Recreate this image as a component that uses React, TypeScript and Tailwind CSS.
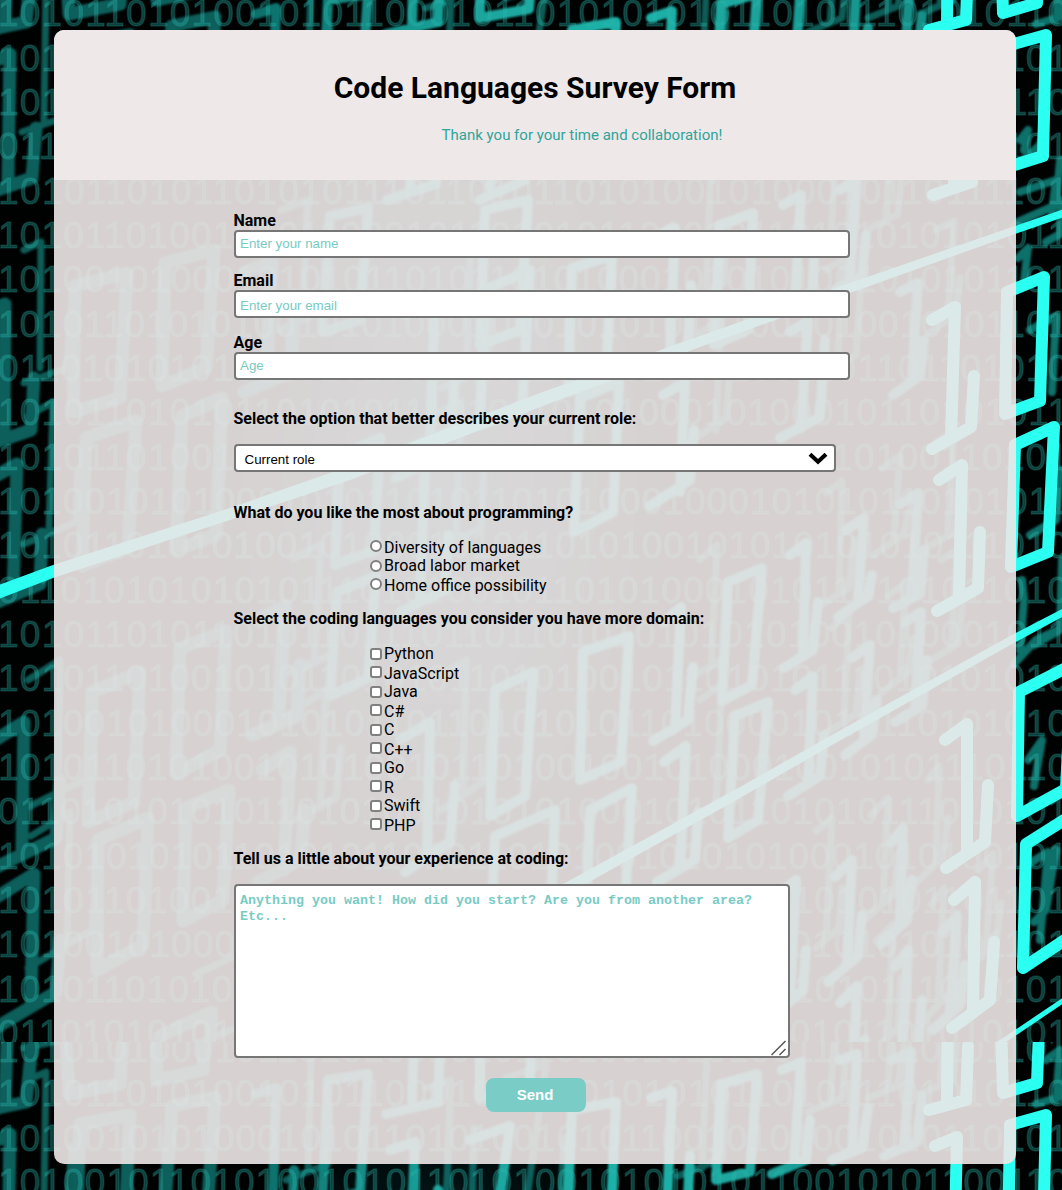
import React from "react";

const TILE_HEIGHT = 1080;

const DIGIT_ROWS = [
  "10101010001011010100101011010010101001101010101101",
  "10101101010010101100010110101010101101011101010110",
  "10100101010001010110101001010110010101001010110101",
  "10100101101010010101101010010101010110010101100110",
  "01101010101110101010010101101010010110101010101101",
  "10101101011010101110110101101010010100010110111101",
  "10101101001010110001011010101101010110101010101011",
  "10100101000101010110101101010001010101001010101101",
  "10101101010100101010001010101010101001010010101101",
  "01101010101011010100101011010010101001101101101010",
  "10101101010110101011101011010100010100010110101011",
  "10101101001010110001011010101101010110110100110101",
  "10100101010001010110101101010001000101010110101011",
  "10101101010100101000101011010100101010101010111010",
  "01101010101010111010100101101010001010110101011010",
  "10101101011010110111011011010101010101001010001011",
  "10101101001010110101011010100101101010111010101010",
  "10100101000101010110110101010110100001010110101010",
  "10101101010010101001011010010010100010010101110110",
  "01101010101011010100101010100010101101010111010101",
  "10101010101101010110101101010010101010001010100101",
  "10101101001010100110101101010101010101010101101101",
  "10100101000100110110101011010101010100101010101101",
  "10101101010100101010001010101101010101010111010101",
  "01101010101101010010101101001010100110101101010101",
];

// A slanted zero given by its four corners: top left, top right, bottom right, bottom left.
type Zero = [number, number, number, number, number, number, number, number];
// A slanted one given by flag start, top, stem foot, base left, base right and tick end.
type One = [number, number, number, number, number, number, number, number, number, number, number, number];

const zeroPath = (z: Zero) => `M${z[0]} ${z[1]}L${z[2]} ${z[3]}L${z[4]} ${z[5]}L${z[6]} ${z[7]}Z`;
const onePath = (o: One) =>
  `M${o[0]} ${o[1]}L${o[2]} ${o[3]}L${o[4]} ${o[5]}M${o[6]} ${o[7]}L${o[8]} ${o[9]}L${o[10]} ${o[11]}`;

const BRIGHT_ZEROS: Zero[] = [
  [1000, -90, 1041, -100, 1037, 3, 1003, 13],
  [1010, 45, 1046, 35, 1043, 156, 1008, 167],
  [1007, 292, 1044, 277, 1040, 401, 1005, 414],
  [1015, 445, 1054, 427, 1048, 552, 1011, 567],
  [1019, 692, 1072, 665, 1066, 789, 1017, 816],
  [1026, 844, 1080, 810, 1075, 933, 1023, 968],
];
const BRIGHT_ONES: One[] = [
  [930, -80, 948, -90, 947, 24, 929, 30, 966, 20, 968, -34],
  [935, 66, 957, 57, 954, 186, 933, 195, 972, 182, 976, 130],
  [932, 320, 955, 307, 951, 438, 932, 449, 971, 427, 974, 376],
  [939, 480, 962, 465, 959, 598, 937, 611, 978, 588, 980, 532],
  [945, 740, 967, 724, 967, 852, 946, 868, 985, 842, 988, 785],
  [954, 900, 975, 882, 973, 1010, 952, 1028, 990, 1000, 994, 942],
];

const MID_ZEROS: Zero[] = [
  [480, -60, 535, -74, 529, 9, 480, 18],
  [328, 0, 368, -6, 360, 112, 322, 124],
  [330, 216, 368, 208, 360, 320, 322, 332],
  [485, 210, 528, 200, 520, 330, 480, 345],
  [485, 290, 530, 270, 522, 410, 480, 425],
  [572, 30, 616, 22, 610, 150, 566, 163],
  [572, 268, 612, 256, 606, 378, 568, 392],
  [580, 398, 619, 382, 613, 512, 574, 532],
  [583, 652, 629, 636, 621, 762, 580, 780],
  [721, 4, 757, -6, 750, 92, 716, 100],
  [720, 225, 753, 213, 748, 330, 714, 345],
  [728, 582, 762, 568, 752, 685, 722, 701],
  [735, 716, 768, 702, 758, 820, 728, 838],
  [495, 690, 533, 672, 525, 796, 490, 816],
  [495, 836, 555, 810, 550, 940, 490, 960],
  [337, 592, 376, 576, 368, 678, 330, 696],
  [340, 455, 380, 438, 374, 550, 335, 565],
  [590, 810, 632, 788, 625, 900, 586, 920],
];

const MID_ONES: One[] = [
  [256, 14, 276, 8, 272, 150, 250, 162, 292, 146, 294, 90],
  [390, 70, 415, 62, 410, 190, 387, 200, 436, 184, 438, 110],
  [390, -45, 414, -54, 412, 26, 386, 34, 438, 22, 440, -38],
  [470, 60, 510, 46, 490, 186, 480, 200, 525, 180, 528, 120],
  [405, 315, 435, 302, 430, 440, 405, 450, 452, 430, 455, 360],
  [395, 478, 425, 464, 420, 598, 400, 612, 445, 590, 448, 535],
  [400, 740, 430, 722, 427, 850, 405, 872, 450, 842, 455, 785],
  [651, 18, 672, 11, 666, 150, 642, 158, 687, 140, 690, 75],
  [650, 238, 675, 228, 670, 352, 648, 364, 688, 345, 691, 285],
  [663, 395, 685, 382, 680, 492, 650, 506, 690, 480, 694, 430],
  [664, 622, 681, 607, 675, 728, 653, 741, 688, 720, 693, 667],
  [664, 762, 686, 746, 680, 868, 657, 882, 695, 860, 698, 812],
  [782, -10, 801, -18, 794, 84, 772, 94, 806, 80, 810, 40],
  [783, 205, 801, 195, 795, 300, 772, 315, 812, 296, 815, 240],
  [790, 332, 808, 321, 801, 428, 780, 438, 820, 417, 825, 340],
  [790, 555, 806, 543, 803, 655, 784, 668, 813, 650, 818, 602],
  [795, 690, 813, 676, 808, 782, 788, 796, 820, 776, 824, 735],
  [846, 530, 864, 518, 858, 600, 838, 617, 868, 596, 872, 575],
  [852, 658, 870, 645, 864, 740, 845, 755, 872, 735, 877, 700],
  [840, -20, 857, -26, 852, 72, 832, 80, 862, 68, 868, 28],
  [840, 190, 857, 180, 850, 278, 835, 290, 862, 276, 866, 235],
  [892, -20, 911, -28, 904, 66, 884, 76, 917, 62, 922, 16],
  [900, 504, 918, 493, 912, 593, 893, 608, 920, 594, 924, 550],
  [905, 622, 921, 612, 915, 708, 895, 722, 922, 706, 927, 660],
  [900, 292, 918, 283, 912, 378, 893, 395, 920, 376, 924, 340],
  [892, 842, 903, 828, 900, 925, 881, 944, 907, 920, 912, 880],
  [835, 877, 852, 860, 847, 963, 828, 982, 858, 956, 862, 915],
  [895, 967, 908, 950, 902, 1060, 890, 1080, 918, 1050, 922, 1000],
  [840, 1003, 857, 986, 852, 1100, 828, 1120, 862, 1090, 865, 1040],
  [780, 893, 796, 880, 790, 1000, 780, 1010, 803, 990, 806, 950],
  [942, 932, 957, 916, 950, 1010, 933, 1030, 960, 1005, 965, 965],
];

const DIM_ZEROS: Zero[] = [
  [65, -60, 125, -75, 120, 4, 69, 14],
  [155, -80, 206, -90, 203, -10, 157, 0],
  [80, 44, 130, 35, 124, 160, 76, 172],
  [172, 26, 215, 17, 206, 150, 162, 165],
  [75, 286, 127, 273, 120, 398, 73, 412],
  [165, 263, 214, 250, 206, 368, 162, 386],
  [86, 438, 136, 421, 128, 548, 82, 566],
  [182, 416, 222, 398, 216, 535, 176, 550],
  [92, 692, 140, 672, 134, 802, 88, 822],
  [180, 648, 226, 631, 220, 750, 176, 774],
  [98, 840, 148, 818, 143, 945, 97, 970],
  [186, 808, 229, 790, 223, 900, 183, 921],
];

const DIM_ONES: One[] = [
  [-15, -60, 8, -68, 5, 20, -12, 30, 26, 22, 32, -34],
  [-8, 62, 10, 54, 8, 182, -14, 194, 32, 178, 36, 128],
  [-12, 312, 5, 304, 4, 430, -12, 445, 31, 430, 34, 378],
  [-8, 478, 17, 464, 13, 592, -12, 606, 40, 584, 42, 534],
  [-8, 742, 24, 722, 22, 848, -14, 872, 56, 838, 60, 780],
  [-5, 898, 34, 874, 31, 1000, -8, 1030, 56, 992, 60, 940],
  [258, 620, 285, 606, 278, 725, 252, 735, 297, 716, 300, 665],
  [262, 770, 290, 752, 284, 870, 258, 882, 300, 860, 305, 810],
  [245, 272, 272, 262, 266, 380, 244, 392, 290, 372, 294, 320],
  [160, 1036, 212, 1012, 206, 1090, 150, 1110, 212, 1085, 215, 1060],
];

const EDGE_ONES: One[] = [
  [1020, 140, 1028, 130, 1024, 150, 1018, 165, 1040, 145, 1044, 130],
  [1020, 192, 1056, 180, 1052, 212, 1018, 222, 1056, 205, 1060, 160],
  [1018, 258, 1028, 248, 1024, 282, 1046, 242, 1060, 234, 1061, 200],
  [1030, 330, 1056, 316, 1052, 392, 1030, 535, 1056, 520, 1060, 470],
  [1022, 580, 1024, 600, 1020, 650, 1034, 645, 1060, 630, 1062, 560],
  [1028, 760, 1042, 740, 1034, 786, 1014, 664, 1036, 640, 1058, 630],
  [1032, 862, 1048, 852, 1040, 940, 1034, 922, 1046, 910, 1056, 850],
  [1046, -20, 1060, -30, 1056, 20, 1036, 24, 1064, 16, 1066, 0],
];

/** One repeat of the binary-code wallpaper. */
function Tile({ y, clip }: { y: number; clip: string }) {
  return (
    <g clipPath={clip}>
      <g transform={`translate(0 ${y})`} fill="none" strokeLinecap="round" strokeLinejoin="round">
        <g filter="url(#soften)">
          <path
            d={[...MID_ONES, ...DIM_ONES].map(onePath).join("")}
            transform="translate(36 -62)"
            stroke="#0d5b57"
            strokeWidth="7"
          />
          <g stroke="#0a5f5b" strokeWidth="13">
            <path d={DIM_ZEROS.map(zeroPath).join("")} />
            <path d={DIM_ONES.map(onePath).join("")} />
          </g>
          <g stroke="url(#depth)" strokeWidth="10">
            <path d={MID_ZEROS.map(zeroPath).join("")} />
            <path d={MID_ONES.map(onePath).join("")} />
          </g>
          <path d={EDGE_ONES.map(onePath).join("")} stroke="#107069" strokeWidth="8" />
          <ellipse cx="440" cy="470" rx="250" ry="460" fill="url(#glow)" />
        </g>
        <g
          fill="#2bb5ab"
          fillOpacity="0.34"
          stroke="#2bb5ab"
          strokeOpacity="0.2"
          strokeWidth="1.4"
          fontFamily="'Liberation Sans', Arial, sans-serif"
          fontSize="37"
          filter="url(#edge)"
        >
          {DIGIT_ROWS.map((row, i) => (
            <text key={i} x={-2} y={-18 + i * 44.33} textLength={1070} lengthAdjust="spacing">
              {row}
            </text>
          ))}
        </g>
        <g filter="url(#edge)">
          <g stroke="#2bfff1" strokeWidth="12">
            <path d={BRIGHT_ZEROS.map(zeroPath).join("")} />
            <path d={BRIGHT_ONES.map(onePath).join("")} />
          </g>
          <g fill="#2bfff1">
            <path d="M1064 209L1015 226L850 283L700 336L540 393L350 466L230 508L53 565L-4 586V600L53 578L230 520L350 480L540 407L700 347L850 293L1015 234L1064 217Z" />
            <path d="M1064 608L1010 636L830 736L740 787L574 878L400 970V982L580 887L740 798L832 745L1012 644L1064 616Z" />
            <path d="M1064 997L1009 1034L960 1066V1072L1009 1040L1064 1003Z" />
          </g>
        </g>
      </g>
    </g>
  );
}

function Wallpaper() {
  return (
    <svg className="absolute inset-0" width="1062" height="1190" viewBox="0 0 1062 1190" aria-hidden="true">
      <defs>
        <filter id="soften" x="-5%" y="-5%" width="110%" height="110%">
          <feGaussianBlur stdDeviation="1" />
        </filter>
        <filter id="edge" x="-5%" y="-5%" width="110%" height="110%">
          <feGaussianBlur stdDeviation="0.6" />
        </filter>
        <linearGradient id="depth" gradientUnits="userSpaceOnUse" x1="240" y1="0" x2="960" y2="0">
          <stop offset="0" stopColor="#0c6a66" />
          <stop offset="0.3" stopColor="#1aa39b" />
          <stop offset="0.55" stopColor="#1fb3aa" />
          <stop offset="1" stopColor="#148a83" />
        </linearGradient>
        <radialGradient id="glow">
          <stop offset="0" stopColor="#2cb8c4" stopOpacity="0.42" />
          <stop offset="1" stopColor="#2cb8c4" stopOpacity="0" />
        </radialGradient>
        <clipPath id="upper">
          <rect width="1062" height="1042" />
        </clipPath>
        <clipPath id="lower">
          <rect y="1042" width="1062" height="148" />
        </clipPath>
      </defs>
      <rect width="1062" height="1190" fill="#000202" />
      <Tile y={0} clip="url(#upper)" />
      <Tile y={TILE_HEIGHT} clip="url(#lower)" />
    </svg>
  );
}

const FIELD =
  "block h-7 w-[616px] rounded border-2 border-[#767676] bg-white px-1 font-['Liberation_Sans',Arial,sans-serif] text-[13.333px] placeholder:text-[#78cbc4] placeholder:opacity-100";

const LABEL = "block h-5 pt-px -indent-[0.5px] font-bold";

function Option({ type, label, raised }: { type: "radio" | "checkbox"; label: string; raised: boolean }) {
  return (
    <label className="flex h-[19px] items-center text-base leading-[19px]">
      <input
        type={type}
        name={type}
        className={`size-3 shrink-0 appearance-none border-2 border-[#808080] bg-white ${
          type === "radio" ? "rounded-full" : "rounded-[3px]"
        } ${raised ? "mb-0.5" : ""}`}
      />
      <span className={raised ? "ml-0.5 pt-0.5" : "ml-0.5"}>{label}</span>
    </label>
  );
}

const LANGUAGES = ["Python", "JavaScript", "Java", "C#", "C", "C++", "Go", "R", "Swift", "PHP"];
const REASONS = ["Diversity of languages", "Broad labor market", "Home office possibility"];

export default function App() {
  return (
    <div className="relative h-[1190px] w-[1062px] overflow-hidden bg-black pt-[30px] font-[Roboto,sans-serif] text-black">
      <Wallpaper />
      <main className="relative ml-[54px] h-[1134px] w-[962px] overflow-hidden rounded-[10px] bg-[rgba(238,232,232,0.9)]">
        <header className="h-[150px] bg-[#eee8e8] pt-[39px] text-center">
          <h1 className="text-[30px] leading-[38px] font-bold">Code Languages Survey Form</h1>
          <p className="mt-[19px] pl-[94px] text-[15px] leading-[18px] text-[#2fa59b]">
            Thank you for your time and collaboration!
          </p>
        </header>
        <form className="pl-[180px] text-base leading-5">
          <label className={`mt-[30px] ${LABEL}`}>Name</label>
          <input className={`${FIELD} pb-0.5`} placeholder="Enter your name" />
          <label className={`mt-3 ${LABEL}`}>Email</label>
          <input className={`${FIELD} pt-0.5`} placeholder="Enter your email" />
          <label className={`mt-3.5 ${LABEL}`}>Age</label>
          <input className={`${FIELD} pb-0.5`} placeholder="Age" />

          <p className={`mt-7 ${LABEL}`}>Select the option that better describes your current role:</p>
          <div className="mt-4 flex h-7 w-[602px] items-center justify-between rounded border-2 border-[#767676] bg-white pr-1.5 pl-[9px] font-['Liberation_Sans',Arial,sans-serif] text-[13.333px]">
            <span className="pt-[3px] -indent-[0.5px]">Current role</span>
            <svg width="20" height="13" viewBox="0 0 20 13" aria-hidden="true">
              <path d="M2 2.2L10 9.8L18 2.2" fill="none" stroke="#000" strokeWidth="4" />
            </svg>
          </div>

          <p className={`mt-[30px] ${LABEL}`}>What do you like the most about programming?</p>
          <div className="mt-[15px] pl-[136px]">
            {REASONS.map((reason, i) => (
              <Option key={reason} type="radio" label={reason} raised={i % 2 === 0} />
            ))}
          </div>

          <p className={`mt-[14px] ${LABEL}`}>Select the coding languages you consider you have more domain:</p>
          <div className="mt-4 pl-[136px]">
            {LANGUAGES.map((language, i) => (
              <Option key={language} type="checkbox" label={language} raised={i % 2 === 1} />
            ))}
          </div>

          <p className={`mt-[14px] ${LABEL}`}>Tell us a little about your experience at coding:</p>
          <div className="relative mt-4 h-[174px] w-[556px]">
            <textarea
              className="block h-full w-full resize-none rounded border-2 border-[#767676] bg-white px-1 py-[7px] font-['Liberation_Mono','Courier_New',monospace] text-[13.333px] leading-4 font-bold placeholder:text-[#78cbc4] placeholder:opacity-100"
              placeholder="Anything you want! How did you start? Are you from another area? Etc..."
            />
            <svg className="absolute right-[3px] bottom-0.5" width="16" height="16" viewBox="0 0 16 16" aria-hidden="true">
              <path d="M0.5 15L14.5 1M8.5 15L14.5 9" stroke="#555" strokeWidth="1.5" />
            </svg>
          </div>
          <button
            type="button"
            className="mt-5 ml-[252px] block h-[34px] w-[100px] rounded-lg bg-[#7accc6] pr-0.5 pl-0 font-['Liberation_Sans',Arial,sans-serif] text-[15px] font-bold text-white"
          >
            Send
          </button>
        </form>
      </main>
    </div>
  );
}
